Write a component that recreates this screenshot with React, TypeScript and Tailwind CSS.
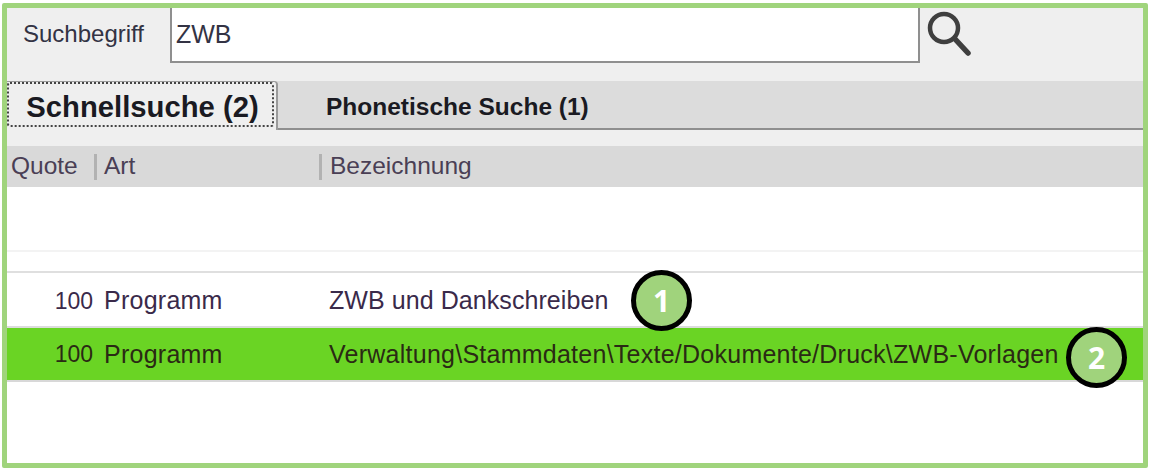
import React from "react";

const font = { fontFamily: '"Liberation Sans", Arial, sans-serif' };

function Badge({ n, className }: { n: number; className: string }) {
  return (
    <div
      className={
        "absolute w-[61px] h-[61px] rounded-full bg-[#a0d37c] border-[5px] border-black flex items-center justify-center text-white font-bold text-[30px] font-['Open_Sans',sans-serif] " +
        className
      }
    >
      {n}
    </div>
  );
}

function Row({
  name,
  green,
  height,
}: {
  name: string;
  green?: boolean;
  height: string;
}) {
  return (
    <div
      className={
        "flex items-center text-[25px] " +
        height +
        (green
          ? " bg-[#6ad424] text-[#2a2a14] border-b-2 border-[#d8d8d8] pt-[1px] tracking-[0.25px]"
          : " text-[#3a2a4a] border-b-2 border-[#dcdcdc] pt-[3px] tracking-[0.07px]")
      }
    >
      <div className="w-[86px] text-right text-[23px] tracking-normal">100</div>
      <div className="w-[224px] pl-[11px] tracking-[0.25px]">Programm</div>
      <div className="pl-[12px] whitespace-nowrap">{name}</div>
    </div>
  );
}

export default function App() {
  return (
    <div className="w-[1151px] h-[471px] bg-white pt-[3px] pl-[2px] overflow-hidden" style={font}>
      <div className="relative w-[1146px] h-[465px] border-[5px] border-[#a0d47c] rounded-[2px] bg-white flex flex-col">
        {/* search bar */}
        <div className="h-[73px] bg-[#efefef] flex items-start shrink-0">
          <div className="w-[163px] h-[52px] pl-[16px] flex items-center text-[24px] text-[#333344]">
            Suchbegriff
          </div>
          <div className="w-[750px] h-[55px] bg-white border-x-2 border-b-2 border-[#8f8f8f] flex items-center pl-[4px] text-[25px] text-[#333344]">
            ZWB
          </div>
          <svg className="ml-[5px] mt-[2px]" width="48" height="50" viewBox="0 0 48 50" fill="none">
            <circle cx="19" cy="18" r="14" stroke="#3f3f3f" strokeWidth="4.5" />
            <path d="M30 29 L43 43" stroke="#3f3f3f" strokeWidth="5.5" strokeLinecap="round" />
          </svg>
        </div>

        {/* tabs */}
        <div className="h-[49px] bg-[#dcdcdc] flex items-stretch border-b-2 border-[#8f8f8f] shrink-0">
          <div className="w-[271px] h-[49px] bg-[#efefef] border-r-2 border-t border-[#9a9a9a] rounded-tr-[4px] pr-[2px] shrink-0">
            <div className="h-[45px] border-2 border-dotted border-[#444] rounded-[3px] flex items-center justify-center pt-[7px] pl-[4px] text-[29.25px] font-bold text-[#1a1a22]">
              Schnellsuche (2)
            </div>
          </div>
          <div className="pl-[48px] pt-[6px] flex items-center text-[24.5px] font-bold text-[#1a1a22]">
            Phonetische Suche (1)
          </div>
        </div>

        <div className="h-[16px] bg-[#efefef] shrink-0" />

        {/* table header */}
        <div className="h-[41px] bg-[#d9d9d9] flex items-center text-[24.5px] text-[#4a3f55] shrink-0">
          <div className="w-[90px] pl-[4px] h-[26px] flex items-center border-r-[3px] border-[#b2b2b2]">Quote</div>
          <div className="w-[225px] pl-[7px] h-[26px] flex items-center border-r-[3px] border-[#b2b2b2]">Art</div>
          <div className="pl-[8px]">Bezeichnung</div>
        </div>

        {/* rows */}
        <div className="h-[65px] border-b-2 border-[#f3f3f3] shrink-0" />
        <div className="h-[21px] border-b-2 border-[#dfdfdf] shrink-0" />
        <Row name="ZWB und Dankschreiben" height="h-[55px]" />
        <Row name="Verwaltung\Stammdaten\Texte/Dokumente/Druck\ZWB-Vorlagen" green height="h-[54px]" />

        <Badge n={1} className="left-[624px] top-[262px]" />
        <Badge n={2} className="left-[1059px] top-[319px]" />
      </div>
    </div>
  );
}
